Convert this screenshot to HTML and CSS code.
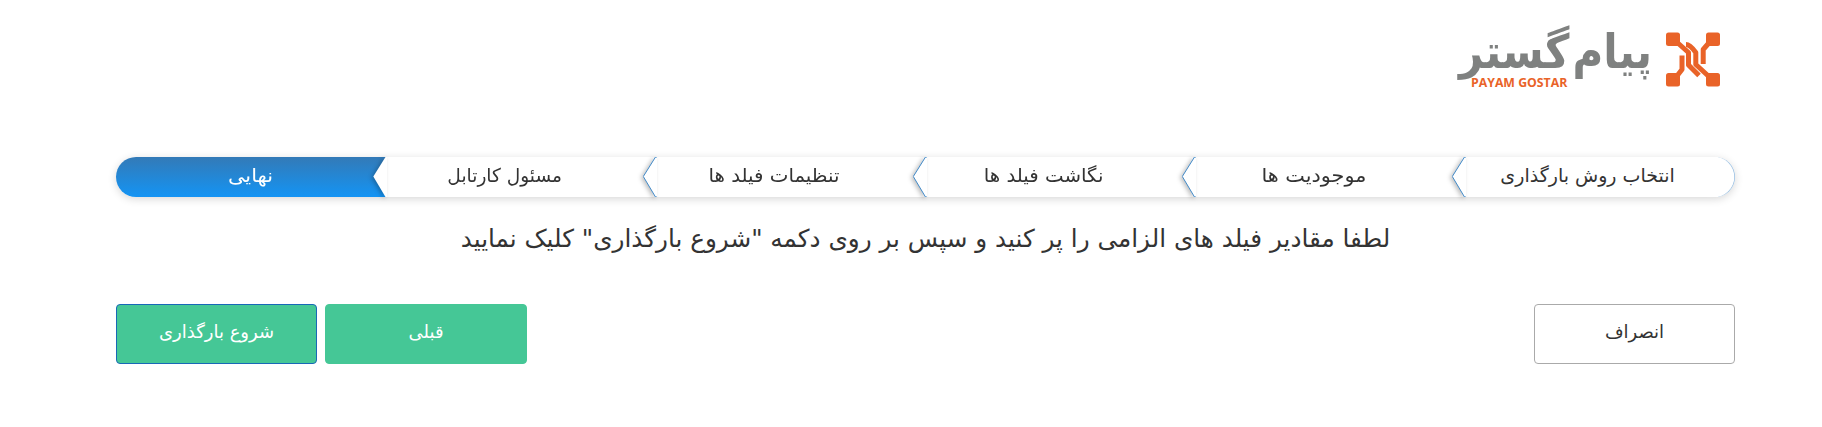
FILE: index.html
```
<!DOCTYPE html>
<html lang="fa" dir="rtl">
<head>
<meta charset="utf-8">
<title>پیام گستر</title>
<link rel="stylesheet" href="styles.css">
</head>
<body>
<main class="page">
  <header class="brand">
    <svg class="brand-mark" viewBox="0 0 54 54" aria-hidden="true">
      <g fill="#e96328">
        <rect x="0" y="0" width="14" height="13.5" rx="2.5"/>
        <rect x="40" y="0" width="14" height="13.5" rx="2.5"/>
        <rect x="0" y="40.5" width="14" height="13.5" rx="2.5"/>
        <rect x="40" y="40.5" width="14" height="13.5" rx="2.5"/>
      </g>
      <g fill="none" stroke="#e96328" stroke-width="5" stroke-linejoin="round">
        <path d="M9 8L22.500 20V32.500L33 43"/>
        <path d="M20 12Q24 12 29.800 20V32L44 45"/>
        <path d="M45 8L37.200 17V31.500"/>
        <path d="M9 46L16 37V23"/>
      </g>
    </svg>
    <div class="brand-text">
      <div class="brand-fa"><span class="brand-word">پیام</span> <span class="brand-word">گستر</span></div>
      <span class="brand-en" dir="ltr">PAYAM GOSTAR</span>
    </div>
  </header>
  <ol class="steps">
    <li class="step first"><span class="label">انتخاب روش بارگذاری</span><svg class="chevron" viewBox="0 0 14 40"><path d="M14 0H12.500L.3 19.500L12.500 40H14"/></svg></li>
    <li class="step entities"><span class="label">موجودیت ها</span><svg class="chevron" viewBox="0 0 14 40"><path d="M14 0H12.500L.3 19.500L12.500 40H14"/></svg></li>
    <li class="step mapping"><span class="label">نگاشت فیلد ها</span><svg class="chevron" viewBox="0 0 14 40"><path d="M14 0H12.500L.3 19.500L12.500 40H14"/></svg></li>
    <li class="step mapping"><span class="label">تنظیمات فیلد ها</span><svg class="chevron" viewBox="0 0 14 40"><path d="M14 0H12.500L.3 19.500L12.500 40H14"/></svg></li>
    <li class="step owner"><span class="label">مسئول کارتابل</span><svg class="chevron plain" viewBox="0 0 14 40"><path d="M14 0H12.500L.3 19.500L12.500 40H14"/></svg></li>
    <li class="step active"><span class="label">نهایی</span></li>
  </ol>
  <h1 class="message">لطفا مقادیر فیلد های الزامی را پر کنید و سپس بر روی دکمه "شروع بارگذاری" کلیک نمایید</h1>
  <div class="actions">
    <button class="btn cancel">انصراف</button>
    <button class="btn green">قبلی</button>
    <button class="btn green focused">شروع بارگذاری</button>
  </div>
</main>
</body>
</html>
```
FILE: styles.css
```
* { box-sizing: border-box; }
body { margin: 0; background: #fff; color: #333; font-family: "DejaVu Sans", sans-serif; }
.page { width: 1619px; margin: 0 87px 0 116px; padding-top: 32px; direction: rtl; }
.brand { display: flex; height: 55px; padding-right: 15px; gap: 14px; }
.brand-mark { width: 54px; height: 55px; flex: none; }
.brand-text { display: flex; flex-direction: column; width: 193px; height: 55px; }
.brand-fa { display: flex; justify-content: space-between; height: 43px; white-space: nowrap; color: #7f8180; font-size: 42px; font-weight: 700; line-height: 43px; transform: scaleY(1.12); transform-origin: 0 36px; }
.brand-word { display: block; }
.brand-en { align-self: flex-end; margin-left: 12px; margin-top: 2px; color: #e96328; font: 700 12.300px/12px "Open Sans", sans-serif; white-space: nowrap; }
.steps { display: flex; list-style: none; margin: 70px 0 0; padding: 0; height: 40px; border-radius: 20px; box-shadow: 0 2px 8px rgba(0,0,0,.16); }
.step { position: relative; flex: 0 0 calc(100% / 6); display: flex; align-items: center; justify-content: center; padding: 0 33px 5px 0; font-size: 19px; white-space: nowrap; background: #fff; }
.first { padding-right: 25px; border-radius: 0 20px 20px 0; box-shadow: inset -1px 0 0 -.3px #8fb9df; }
.active { padding-right: 0; color: #fff; border-radius: 20px 0 0 20px; background: linear-gradient(#337ab7, #1494f4); }
.chevron { position: absolute; z-index: 1; left: -13px; top: 0; width: 14px; height: 40px; fill: #fff; stroke: #428bca; filter: drop-shadow(-2px 1px 2px rgba(0,0,0,.25)); }
.plain { stroke: none; }
.label { display: inline-block; white-space: nowrap; }
.entities .label { transform: scaleX(1.095); }
.mapping .label { transform: scaleX(1.04); }
.owner .label { transform: scaleX(.977); }
.active .label { transform: scaleX(1.1); }
.message { margin: 21px 0 0; height: 42px; line-height: 42px; text-align: center; font-size: 24.7px; font-weight: 400; white-space: nowrap; }
.actions { display: flex; gap: 8px; margin-top: 44px; }
.btn { width: 201px; height: 60px; border-radius: 4px; border: 1px solid #aaa; background: #fff; color: #333; font: 18px "DejaVu Sans", sans-serif; padding: 0 0 6px; }
.cancel { margin-left: auto; }
.green { width: 202px; background: #45c796; border-color: #45c796; color: #fff; }
.focused { width: 201px; border-color: #1868b7; }
```
